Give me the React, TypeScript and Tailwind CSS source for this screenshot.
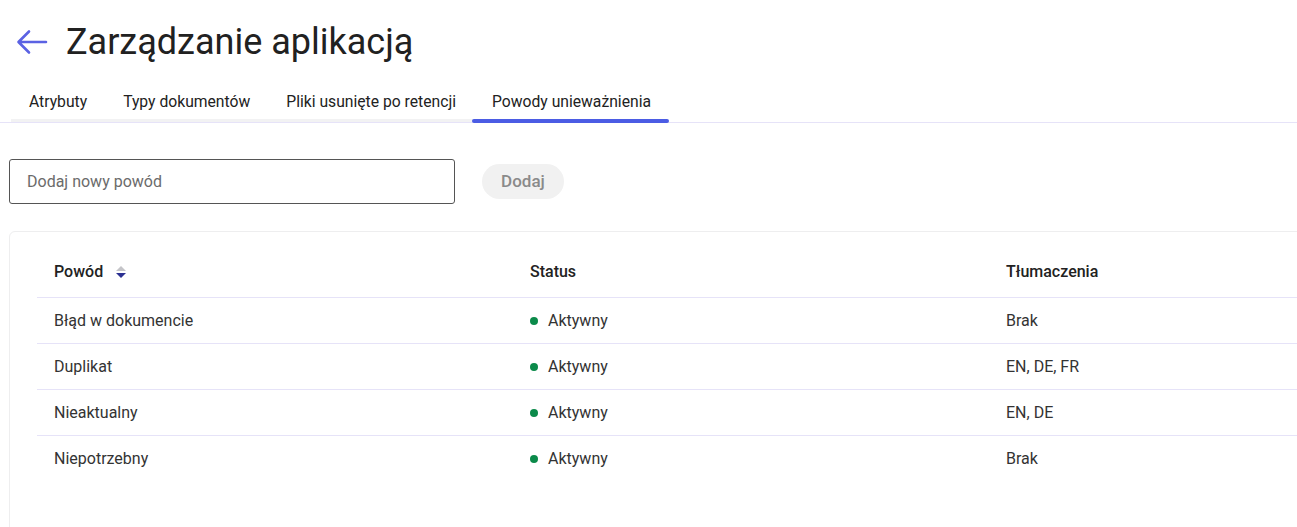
import React from 'react';

const tabs = ['Atrybuty', 'Typy dokumentów', 'Pliki usunięte po retencji', 'Powody unieważnienia'];

const rows = [
    {reason: 'Błąd w dokumencie', status: 'Aktywny', translations: 'Brak'},
    {reason: 'Duplikat', status: 'Aktywny', translations: 'EN, DE, FR'},
    {reason: 'Nieaktualny', status: 'Aktywny', translations: 'EN, DE'},
    {reason: 'Niepotrzebny', status: 'Aktywny', translations: 'Brak'},
];

function BackArrow() {
    return (
        <svg width="32" height="28" viewBox="0 0 32 28" fill="none" aria-hidden>
            <path
                d="M30 14H3M13 3.5L2.5 14L13 24.5"
                stroke="#5b62e3"
                strokeWidth="2.6"
                strokeLinecap="round"
                strokeLinejoin="round"
            />
        </svg>
    );
}

function SortIcon() {
    return (
        <svg width="12" height="14" viewBox="0 0 12 14" aria-hidden>
            <path d="M6 1L11 6H1Z" fill="#c4c4c8" />
            <path d="M1 8H11L6 13Z" fill="#2b3092" />
        </svg>
    );
}

const headCell = 'h-[51px] flex items-center pl-[17px] border-b border-[#e6e3f8] text-[16px] font-medium text-[#222]';

export default function App() {
    return (
        <div className="min-h-screen bg-white overflow-hidden font-['Roboto',sans-serif] text-[#222]">
            <div className="flex items-center h-[84px] pl-[16px] gap-[18px]">
                <BackArrow />
                <h1 className="text-[36px] leading-none text-[#212121]">Zarządzanie aplikacją</h1>
            </div>

            <div className="flex border-b border-[#e6e3f8] pl-[11px]">
                {tabs.map((tab, i) => {
                    const active = i === tabs.length - 1;
                    return (
                        <div key={tab} className="flex flex-col">
                            <span className="px-[18px] pt-[6px] pb-[5px] text-[15.7px] leading-6 text-[#222]">
                                {tab}
                            </span>
                            {active ? (
                                <div className="h-[4px] -mb-px -ml-[2px] rounded-full bg-[#4b5ce4]" />
                            ) : (
                                <div className="h-[3px] bg-[#f2f2f3]" />
                            )}
                        </div>
                    );
                })}
            </div>

            <div className="flex items-center pt-[36px] pl-[9px]">
                <div className="w-[446px] h-[45px] border border-[#555] rounded-[3px] flex items-center px-[17px]">
                    <span className="text-[16px] text-[#6b6b6b]">Dodaj nowy powód</span>
                </div>
                <button className="ml-[27px] w-[82px] h-[35px] rounded-full bg-[#f1f1f1] text-[17px] font-medium text-[#8a8a8a]">
                    Dodaj
                </button>
            </div>

            <div className="mt-[27px] ml-[9px] w-[1490px] border border-[#eeeeef] rounded-[6px] pt-[15px] pb-[60px] pl-[27px]">
                <div className="grid grid-cols-[476px_476px_476px]">
                    <div className={headCell}>
                        Powód
                        <span className="ml-[12px] flex"><SortIcon /></span>
                    </div>
                    <div className={headCell}>Status</div>
                    <div className={headCell}>Tłumaczenia</div>
                    {rows.map((row, i) => {
                        const border = i < rows.length - 1 ? 'border-b border-[#e6e3f8]' : '';
                        return (
                            <React.Fragment key={row.reason}>
                                <div className={`h-[46px] flex items-center pl-[17px] text-[16px] text-[#333] ${border}`}>
                                    {row.reason}
                                </div>
                                <div className={`h-[46px] flex items-center pl-[17px] text-[16px] text-[#333] ${border}`}>
                                    <span className="w-[8px] h-[8px] rounded-full bg-[#0b8a4a] mr-[10px]" />
                                    {row.status}
                                </div>
                                <div className={`h-[46px] flex items-center pl-[17px] text-[16px] text-[#333] ${border}`}>
                                    {row.translations}
                                </div>
                            </React.Fragment>
                        );
                    })}
                </div>
            </div>
        </div>
    );
}
